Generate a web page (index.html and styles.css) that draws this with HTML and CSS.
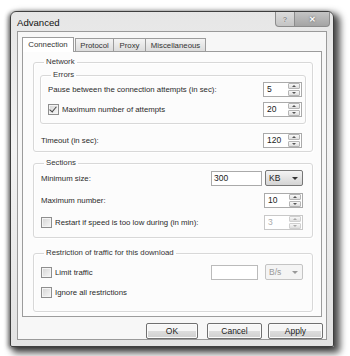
FILE: index.html
```html
<!DOCTYPE html>
<html>
<head>
<meta charset="utf-8">
<link rel="stylesheet" href="styles.css">
</head>
<body>
<div class="window">
  <div class="titlebar">
    <span class="title">Advanced</span>
    <div class="caption">
      <span class="cbtn help">?</span>
      <span class="cbtn close">✕</span>
    </div>
  </div>
  <div class="client">
    <div class="tabs">
      <div class="tab active t-conn">Connection</div>
      <div class="tab t-proto">Protocol</div>
      <div class="tab t-proxy">Proxy</div>
      <div class="tab t-misc">Miscellaneous</div>
    </div>
    <div class="panel">
      <fieldset class="grp net">
        <legend>Network</legend>
        <fieldset class="grp errors">
          <legend>Errors</legend>
          <div class="row r-pause">
            <span>Pause between the connection attempts (in sec):</span>
            <div class="spin"><span class="val">5</span><span class="arrows"><span class="up"></span><span class="dn"></span></span></div>
          </div>
          <div class="row r-max">
            <span class="chk-line"><span class="chk on"></span>Maximum number of attempts</span>
            <div class="spin"><span class="val">20</span><span class="arrows"><span class="up"></span><span class="dn"></span></span></div>
          </div>
        </fieldset>
        <div class="row r-timeout">
          <span>Timeout (in sec):</span>
          <div class="spin"><span class="val">120</span><span class="arrows"><span class="up"></span><span class="dn"></span></span></div>
        </div>
      </fieldset>

      <fieldset class="grp sections">
        <legend>Sections</legend>
        <div class="row r-min">
          <span>Minimum size:</span>
          <div class="pair">
            <span class="textbox wide">300</span>
            <span class="combo">KB<span class="tri"></span></span>
          </div>
        </div>
        <div class="row r-maxnum">
          <span>Maximum number:</span>
          <div class="spin"><span class="val">10</span><span class="arrows"><span class="up"></span><span class="dn"></span></span></div>
        </div>
        <div class="row r-restart">
          <span class="chk-line"><span class="chk"></span>Restart if speed is too low during (in min):</span>
          <div class="spin disabled"><span class="val">3</span><span class="arrows"><span class="up"></span><span class="dn"></span></span></div>
        </div>
      </fieldset>

      <fieldset class="grp restrict">
        <legend>Restriction of traffic for this download</legend>
        <div class="row r-limit">
          <span class="chk-line"><span class="chk"></span>Limit traffic</span>
          <div class="pair">
            <span class="textbox wide2"></span>
            <span class="combo disabled">B/s<span class="tri"></span></span>
          </div>
        </div>
        <div class="row r-ignore">
          <span class="chk-line"><span class="chk"></span>Ignore all restrictions</span>
        </div>
      </fieldset>
    </div>
    <div class="buttons">
      <span class="btn ok">OK</span>
      <span class="btn cancel">Cancel</span>
      <span class="btn apply">Apply</span>
    </div>
  </div>
</div>
</body>
</html>
```

FILE: styles.css
```css
html, body {
  margin: 0;
  padding: 0;
  background: #fff;
}
body {
  width: 350px;
  height: 356px;
  overflow: hidden;
  font-family: "Liberation Sans", Arial, sans-serif;
  font-size: 7.8px;
  color: #2a2a2a;
}
.window {
  margin: 11px 0 0 10px;
  width: 322px;
  height: 334px;
  border: 1px solid #3e3e3e;
  border-radius: 6px 6px 2px 2px;
  background: linear-gradient(#e6e6e6, #f3f3f3 40%, #e2e2e2);
  box-shadow: 4px 4px 7px 2px rgba(0,0,0,0.7), -2px 1px 4px rgba(0,0,0,0.45);
  display: flex;
  flex-direction: column;
}
.titlebar {
  height: 19px;
  display: flex;
  align-items: flex-start;
  justify-content: space-between;
  padding: 0 3px 0 6px;
}
.title {
  font-size: 9.6px;
  margin-top: 5px;
  color: #111;
}
.caption {
  display: flex;
}
.cbtn {
  height: 14px;
  border: 1px solid #8c8c8c;
  border-top: none;
  display: flex;
  align-items: center;
  justify-content: center;
  color: #fff;
  font-size: 8px;
  font-weight: bold;
  text-shadow: 0 0 2px #555;
}
.cbtn.help {
  width: 18px;
  border-radius: 0 0 0 4px;
  background: linear-gradient(#dcdcdc, #c4c4c4);
  color: #8a8a8a;
  text-shadow: 0 0 1px #fff;
}
.cbtn.close {
  width: 34px;
  border-left: none;
  border-radius: 0 0 4px 0;
  background: linear-gradient(#c4c4c4, #a4a4a4);
}
.client {
  flex: 1;
  margin: 0 6px 6px 6px;
  border: 1px solid #9a9a9a;
  background: #f7f7f7;
  padding: 5px 4px 0 4px;
  display: flex;
  flex-direction: column;
}
.tabs {
  display: flex;
  height: 14px;
  align-items: flex-end;
  position: relative;
  z-index: 1;
}
.tab {
  height: 13px;
  line-height: 13px;
  border: 1px solid #9c9c9c;
  border-bottom: none;
  background: linear-gradient(#f4f4f4, #dcdcdc);
  margin-right: -1px;
  text-align: center;
  color: #333;
  box-sizing: border-box;
}
.tab.active {
  height: 15px;
  margin-bottom: -1px;
  background: #fff;
  margin-right: 1px;
}
.t-conn { width: 52px; }
.t-proto { width: 39px; }
.t-proxy { width: 33px; }
.t-misc { width: 61px; }
.panel {
  height: 266px;
  border: 1px solid #9c9c9c;
  background: #fcfcfc;
  padding: 4px 8px 0 10px;
  box-sizing: border-box;
}
.grp {
  margin: 0;
  border: 1px solid #d8d8d8;
  border-radius: 3px;
  padding: 0 6px 0 7px;
  min-width: 0;
  box-shadow: 1px 1px 0 #fff, inset 1px 1px 0 #fff;
}
.grp legend {
  padding: 0 2px;
  margin-left: 3px;
  line-height: 12px;
  color: #333;
}
.net {
  padding: 0 6px 3px 7px;
}
.errors {
  padding: 0 3px 6px 7px;
  margin: 1px 0 0 -1px;
}
.sections {
  margin-top: 5px;
  padding: 0 9px 7px 7px;
}
.restrict {
  margin-top: 9px;
  padding: 0 9px 11px 7px;
}
.row {
  height: 16px;
  display: flex;
  align-items: center;
  justify-content: space-between;
}
.r-max { margin-top: 4px; }
.r-timeout { margin-top: 8px; margin-right: 4px; }
.r-min { margin-top: 1px; }
.r-maxnum, .r-restart { margin-top: 6px; }
.r-limit { margin-top: 5px; }
.r-ignore { margin-top: 4px; }
.chk-line {
  display: flex;
  align-items: center;
}
.chk {
  width: 9px;
  height: 9px;
  border: 1px solid #8e8e8e;
  background: linear-gradient(135deg, #d4d4d4, #f8f8f8);
  margin-right: 3px;
  position: relative;
  box-shadow: inset 0 0 0 1px #f4f4f4;
}
.chk.on::after {
  content: "";
  position: absolute;
  left: 2px;
  top: 0px;
  width: 3px;
  height: 6px;
  border-right: 1.5px solid #444;
  border-bottom: 1.5px solid #444;
  transform: rotate(40deg);
}
.spin {
  display: flex;
  height: 15px;
  width: 39px;
  border: 1px solid #aaa;
  background: #fff;
  box-sizing: border-box;
}
.spin .val {
  flex: 1;
  padding-left: 3px;
  line-height: 13px;
  font-size: 8.5px;
  color: #222;
}
.spin .arrows {
  width: 12px;
  display: flex;
  flex-direction: column;
  gap: 1px;
  padding: 0 1px 0 0;
}
.spin .up, .spin .dn {
  flex: 1;
  border: 1px solid #b5b5b5;
  border-radius: 1px;
  background: linear-gradient(#f8f8f8, #dedede);
  position: relative;
}
.spin .up::after, .spin .dn::after {
  content: "";
  position: absolute;
  left: 3px;
  top: 1px;
  border-left: 2px solid transparent;
  border-right: 2px solid transparent;
}
.spin .up::after { border-bottom: 2px solid #555; }
.spin .dn::after { border-top: 2px solid #555; }
.spin.disabled { border-color: #c8c8c8; }
.spin.disabled .val { color: #aaa; }
.spin.disabled .up::after { border-bottom-color: #aaa; }
.spin.disabled .dn::after { border-top-color: #aaa; }
.spin.disabled .up, .spin.disabled .dn { border-color: #d0d0d0; }
.pair {
  display: flex;
  gap: 3px;
  align-items: center;
}
.textbox {
  height: 15px;
  border: 1px solid #aaa;
  background: #fff;
  box-sizing: border-box;
  line-height: 13px;
  padding-left: 2px;
  font-size: 8.5px;
  color: #222;
}
.textbox.wide { width: 51px; }
.textbox.wide2 { width: 47px; margin-right: 4px; border-color: #bbb; }
.combo {
  width: 38px;
  height: 16px;
  box-sizing: border-box;
  border: 1px solid #777;
  border-radius: 2px;
  background: linear-gradient(#f4f4f4, #d4d4d4);
  display: flex;
  align-items: center;
  justify-content: space-between;
  padding: 0 4px 0 3px;
  font-size: 8.5px;
  color: #222;
}
.combo .tri {
  border-left: 3px solid transparent;
  border-right: 3px solid transparent;
  border-top: 3px solid #333;
}
.combo.disabled {
  border-color: #c4c4c4;
  background: #f4f4f4;
  color: #999;
}
.combo.disabled .tri { border-top-color: #999; }
.buttons {
  display: flex;
  justify-content: flex-end;
  padding: 6px 0 0 0;
}
.btn {
  height: 14px;
  border: 1px solid #707070;
  border-radius: 2px;
  background: linear-gradient(#f6f6f6 50%, #dddddd 51%, #cfcfcf);
  box-shadow: inset 0 0 0 1px #fbfbfb;
  display: flex;
  align-items: center;
  justify-content: center;
  font-size: 8.5px;
  color: #222;
}
.btn.ok { width: 50px; margin-right: 9px; }
.btn.cancel { width: 53px; margin-right: 6px; }
.btn.apply { width: 53px; margin-right: -1px; }
```
